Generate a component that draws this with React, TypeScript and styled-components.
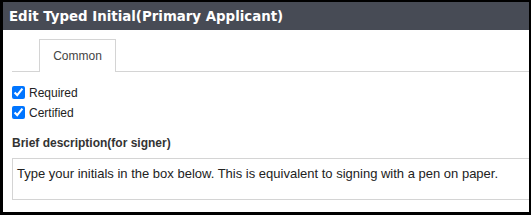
import React, { useState } from 'react'
import styled, { createGlobalStyle } from 'styled-components'

const GlobalStyle = createGlobalStyle`
  html, body {
    margin: 0;
    padding: 0;
    background: #000;
  }
`

const Dialog = styled.div`
  margin: 2px 2px 0 3px;
  height: 210px;
  background: #fff;
  overflow: hidden;
  font-family: 'Liberation Sans', Arial, sans-serif;
`

const Header = styled.div`
  height: 28px;
  background: #474b55;
  color: #fff;
  display: flex;
  align-items: center;
  padding-left: 6px;
  font-family: 'DejaVu Sans', Verdana, sans-serif;
  font-weight: bold;
  font-size: 13.35px;
`

const Body = styled.div`
  padding: 9px 0 0 9px;
`

const TabStrip = styled.div`
  display: flex;
  padding-left: 27px;
  border-bottom: 1px solid #d4d4d4;
  margin-right: -20px;
`

const Tab = styled.div`
  width: 77px;
  height: 33px;
  box-sizing: border-box;
  border: 1px solid #d4d4d4;
  border-bottom: none;
  margin-bottom: -1px;
  background: #fff;
  display: flex;
  align-items: center;
  justify-content: center;
  font-size: 12px;
  color: #444;
`

const Checks = styled.div`
  display: flex;
  flex-direction: column;
  gap: 7px;
  margin-top: 14px;
`

const CheckRow = styled.label`
  display: flex;
  align-items: center;
  gap: 4px;
  font-size: 12px;
  color: #222;
  height: 13px;
`

const Box = styled.input`
  width: 13px;
  height: 13px;
  margin: 0;
  accent-color: #0075ff;
`

const FieldLabel = styled.div`
  margin-top: 17px;
  font-size: 12px;
  font-weight: bold;
  color: #333;
`

const Description = styled.textarea`
  display: block;
  margin-top: 8px;
  width: 540px;
  height: 42px;
  box-sizing: border-box;
  border: 1px solid #d4d4d4;
  padding: 7px 4px;
  font-family: 'Liberation Sans', Arial, sans-serif;
  font-size: 13px;
  color: #222;
  resize: none;
  outline: none;
`

const App: React.FC = () => {
  const [required, setRequired] = useState(true)
  const [certified, setCertified] = useState(true)
  const [text, setText] = useState(
    'Type your initials in the box below. This is equivalent to signing with a pen on paper.'
  )

  return (
    <>
      <GlobalStyle />
      <Dialog>
        <Header>Edit Typed Initial(Primary Applicant)</Header>
        <Body>
          <TabStrip>
            <Tab>Common</Tab>
          </TabStrip>
          <Checks>
            <CheckRow>
              <Box type="checkbox" checked={required} onChange={() => setRequired(!required)} />
              Required
            </CheckRow>
            <CheckRow>
              <Box type="checkbox" checked={certified} onChange={() => setCertified(!certified)} />
              Certified
            </CheckRow>
          </Checks>
          <FieldLabel>Brief description(for signer)</FieldLabel>
          <Description value={text} onChange={(e) => setText(e.target.value)} />
        </Body>
      </Dialog>
    </>
  )
}

export default App
